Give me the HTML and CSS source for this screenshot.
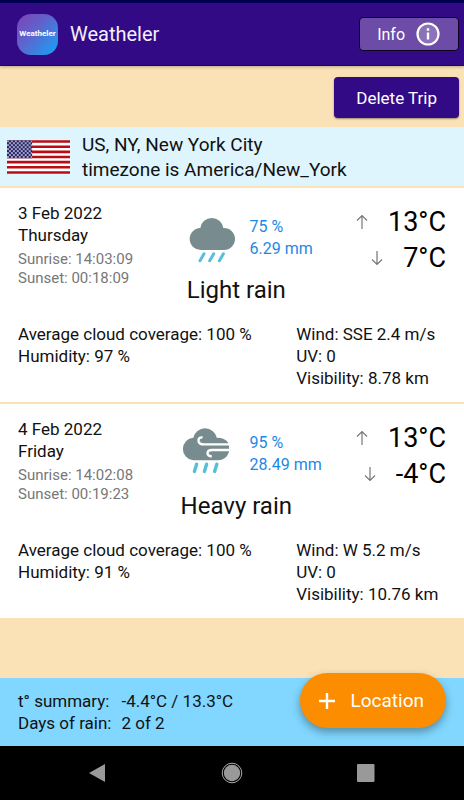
FILE: index.html
```
<!DOCTYPE html>
<html lang="en">
<head>
    <meta charset="UTF-8">
    <meta name="viewport" content="width=device-width, initial-scale=1.0">
    <title>Weatheler</title>
    <link rel="stylesheet" href="styles.css">
</head>
<body>

<!-- App bar -->
<header class="app-bar">
    <div class="logo">Weatheler</div>
    <h1 class="app-title">Weatheler</h1>
    <button type="button" class="info-button">
        Info
        <svg class="info-icon" viewBox="0 0 24 24" aria-hidden="true">
            <circle cx="12" cy="12" r="10.5" fill="#8b72b9" stroke="#fff" stroke-width="2.2"/>
            <path d="M12 10.5v7M12 6.3v2.4" stroke="#fff" stroke-width="2.4"/>
        </svg>
    </button>
</header>

<main class="trip">
    <div class="trip-actions">
        <button type="button" class="delete-button">Delete Trip</button>
    </div>

    <!-- Location -->
    <section class="location">
        <svg class="flag" viewBox="0 0 64 34" role="img" aria-label="US flag">
            <defs>
                <pattern id="stars" width="4" height="4" patternUnits="userSpaceOnUse">
                    <circle cx="1" cy="1" r="0.9" fill="#fff"/>
                    <circle cx="3" cy="3" r="0.9" fill="#fff"/>
                </pattern>
            </defs>
            <rect width="64" height="34" fill="#fff"/>
            <path d="M0 1.3h64M0 6.5h64M0 11.8h64M0 17h64M0 22.2h64M0 27.5h64M0 32.7h64" stroke="#b80d14" stroke-width="2.6"/>
            <rect width="25.5" height="18.3" fill="#22226a"/>
            <rect width="25.5" height="18.3" fill="url(#stars)" opacity="0.85"/>
        </svg>
        <div class="location-text">
            <div>US, NY, New York City</div>
            <div>timezone is America/New_York</div>
        </div>
    </section>

    <!-- Day 1 -->
    <article class="day">
        <div class="day-top">
            <div class="day-date">
                <div>3 Feb 2022</div>
                <div>Thursday</div>
                <div class="sun">
                    <div>Sunrise: 14:03:09</div>
                    <div>Sunset: 00:18:09</div>
                </div>
            </div>
            <div class="day-weather">
                <div class="rain">
                    <svg class="weather-icon" viewBox="0 0 60 60" aria-hidden="true">
                        <path d="M21 42A11 11 0 0 1 20.3 20A11.6 11.6 0 0 1 43.3 20H44A11 11 0 0 1 44 42Z" fill="#788b8f"/>
                        <path d="M24 45.8l-4 7M33.7 45.8l-4 7M43.4 45.8l-4 7" stroke="#55c0d8" stroke-width="3" stroke-linecap="round"/>
                    </svg>
                    <div class="rain-values">
                        <div>75 %</div>
                        <div>6.29 mm</div>
                    </div>
                </div>
                <div class="condition">Light rain</div>
            </div>
            <div class="day-temps">
                <div class="temp">
                    <svg class="arrow" viewBox="0 0 12 16" aria-label="High"><path d="M6 15V1.5M1 6.5l5-5 5 5"/></svg>
                    <span>13°C</span>
                </div>
                <div class="temp">
                    <svg class="arrow" viewBox="0 0 12 16" aria-label="Low"><path d="M6 1v13.5M1 9.5l5 5 5-5"/></svg>
                    <span>7°C</span>
                </div>
            </div>
        </div>
        <div class="day-details">
            <div>
                <div>Average cloud coverage: 100 %</div>
                <div>Humidity: 97 %</div>
            </div>
            <div>
                <div>Wind: SSE 2.4 m/s</div>
                <div>UV: 0</div>
                <div>Visibility: 8.78 km</div>
            </div>
        </div>
    </article>

    <!-- Day 2 -->
    <article class="day">
        <div class="day-top">
            <div class="day-date">
                <div>4 Feb 2022</div>
                <div>Friday</div>
                <div class="sun">
                    <div>Sunrise: 14:02:08</div>
                    <div>Sunset: 00:19:23</div>
                </div>
            </div>
            <div class="day-weather">
                <div class="rain">
                    <svg class="weather-icon" viewBox="0 0 60 60" aria-hidden="true">
                        <path d="M13 36.3A11.3 11.3 0 0 1 13.3 13.8A12 12 0 0 1 36.8 13.8Q45 13.8 48 18.5L49 22V28Q46 36.3 38 36.3Z" fill="#788b8f"/>
                        <g fill="none" stroke="#fff" stroke-width="2.4">
                            <path d="M22.6 13.4C19.5 13 18 15 18.6 17.3Q19.5 20.4 23.5 20.4H50" />
                            <path d="M50 26H32C26.5 26 25.6 32 31.8 32.4"/>
                        </g>
                        <path d="M16.6 40.2l-2.2 7.2M26.6 40.2l-2.2 7.2M36.8 40.2l-2.2 7.2" stroke="#55c0d8" stroke-width="3.4" stroke-linecap="round"/>
                    </svg>
                    <div class="rain-values">
                        <div>95 %</div>
                        <div>28.49 mm</div>
                    </div>
                </div>
                <div class="condition">Heavy rain</div>
            </div>
            <div class="day-temps">
                <div class="temp">
                    <svg class="arrow" viewBox="0 0 12 16" aria-label="High"><path d="M6 15V1.5M1 6.5l5-5 5 5"/></svg>
                    <span>13°C</span>
                </div>
                <div class="temp">
                    <svg class="arrow" viewBox="0 0 12 16" aria-label="Low"><path d="M6 1v13.5M1 9.5l5 5 5-5"/></svg>
                    <span>-4°C</span>
                </div>
            </div>
        </div>
        <div class="day-details">
            <div>
                <div>Average cloud coverage: 100 %</div>
                <div>Humidity: 91 %</div>
            </div>
            <div>
                <div>Wind: W 5.2 m/s</div>
                <div>UV: 0</div>
                <div>Visibility: 10.76 km</div>
            </div>
        </div>
    </article>
</main>

<!-- Trip summary -->
<footer class="summary">
    <dl class="summary-list">
        <dt>t° summary:</dt>
        <dd>-4.4°C / 13.3°C</dd>
        <dt>Days of rain:</dt>
        <dd>2 of 2</dd>
    </dl>
    <button type="button" class="add-button">
        <svg class="plus" viewBox="0 0 16 16" aria-hidden="true"><path d="M8 0v16M0 8h16" stroke="#fff" stroke-width="2.4"/></svg>
        Location
    </button>
</footer>

<!-- System navigation -->
<nav class="system-nav">
    <button type="button" aria-label="Back">
        <svg viewBox="0 0 22 22"><path d="M3 11L19 2V20Z" fill="#999"/></svg>
    </button>
    <button type="button" aria-label="Home">
        <svg viewBox="0 0 22 22"><circle cx="11" cy="11" r="9.8" fill="none" stroke="#aaa"/><circle cx="11" cy="11" r="8.2" fill="#999"/></svg>
    </button>
    <button type="button" aria-label="Recent apps">
        <svg viewBox="0 0 22 22"><rect x="1" y="2" width="17.5" height="18" rx="1" fill="#999"/></svg>
    </button>
</nav>

</body>
</html>
```
FILE: styles.css
```
* {
    box-sizing: border-box;
}
body {
    font-family: Roboto, sans-serif;
    font-size: 17px;
    line-height: 22px;
    color: #111;
    background-color: #fae1b6;
    display: flex;
    flex-direction: column;
    min-height: 100vh;
    margin: 0;
}
button {
    font-family: inherit;
    font-size: 17px;
    color: white;
    border: none;
    cursor: pointer;
}
.app-bar {
    display: flex;
    align-items: center;
    height: 66px;
    padding: 0 5px 0 17px;
    background-color: #330a85;
    border-top: 3px solid #000052;
    border-bottom: 1px solid #1c0564;
    box-shadow: 0 1px 3px rgba(0, 0, 0, 0.25);
}
.logo {
    display: flex;
    justify-content: center;
    align-items: center;
    width: 41px;
    height: 41px;
    border-radius: 14px;
    background: linear-gradient(135deg, #7e42b4, #5c66cf 45%, #12a5f8);
    color: white;
    font-size: 8px;
    font-weight: bold;
}
.app-title {
    margin: 0 auto 0 12px;
    color: #f3effa;
    font-size: 20px;
    font-weight: normal;
}
.info-button {
    display: flex;
    align-items: center;
    gap: 11px;
    height: 34px;
    padding: 0 18px 0 17px;
    background-color: #6c4ca6;
    border: 1px solid #0b0220;
    border-radius: 4px;
    font-size: 16px;
}
.info-icon {
    width: 24px;
    height: 24px;
}
.trip {
    flex: 1;
    padding-bottom: 60px;
}
.trip-actions {
    display: flex;
    justify-content: flex-end;
    padding: 11px 5px 9px;
}
.delete-button {
    height: 41px;
    padding: 0 22px;
    background-color: #330a85;
    border-radius: 4px;
    box-shadow: 0 1px 2px rgba(0, 0, 0, 0.4);
}
.location {
    display: flex;
    align-items: center;
    gap: 12px;
    height: 59px;
    padding: 0 7px;
    background-color: #dff5fe;
    font-size: 19px;
    line-height: 25px;
}
.flag {
    width: 63px;
    height: 34px;
}
.day {
    padding: 14px 18px 13px;
    margin-top: 2px;
    background-color: white;
    white-space: nowrap;
}
.day-top {
    display: grid;
    grid-template-columns: 34fr 34fr 32fr;
}
.day-top > div {
    min-width: 0;
}
.sun {
    margin-top: 4px;
    color: #777;
    font-size: 15px;
    line-height: 19px;
}
.rain {
    display: flex;
    align-items: center;
    gap: 10px;
    padding: 6px 0 0 16px;
}
.weather-icon {
    flex: none;
    width: 60px;
    height: 60px;
}
.rain-values {
    color: #1e88e5;
    font-size: 16px;
}
.condition {
    margin-top: 6px;
    font-size: 24px;
    line-height: 32px;
    text-align: center;
}
.day-temps {
    padding-top: 2px;
}
.temp {
    display: flex;
    justify-content: flex-end;
    align-items: center;
    gap: 20px;
    color: black;
    font-size: 27px;
    line-height: 36px;
}
.arrow {
    width: 12px;
    height: 16px;
    fill: none;
    stroke: #777;
    stroke-width: 1.2;
}
.day-details {
    display: grid;
    grid-template-columns: 65fr 35fr;
    margin-top: 17px;
}
.day-details > div {
    min-width: 0;
}
.summary {
    position: relative;
    padding: 12px 18px;
    background-color: #81d7ff;
}
.summary-list {
    display: grid;
    grid-template-columns: auto 1fr;
    gap: 0 10px;
    margin: 0;
}
.summary-list dd {
    margin: 0;
}
/* Floating button over the edge of the summary */
.add-button {
    position: absolute;
    top: -5px;
    right: 18px;
    display: flex;
    align-items: center;
    gap: 15px;
    height: 55px;
    padding: 0 22px 0 19px;
    background-color: #fc8c00;
    border-radius: 28px;
    box-shadow: 0 4px 8px rgba(0, 0, 0, 0.35);
    font-size: 19px;
}
.plus {
    width: 16px;
    height: 16px;
}
.system-nav {
    display: flex;
    justify-content: space-around;
    align-items: center;
    height: 54px;
    padding: 0 30px;
    background-color: black;
}
.system-nav button {
    padding: 0;
    background: none;
}
.system-nav svg {
    display: block;
    width: 22px;
    height: 22px;
}
```
